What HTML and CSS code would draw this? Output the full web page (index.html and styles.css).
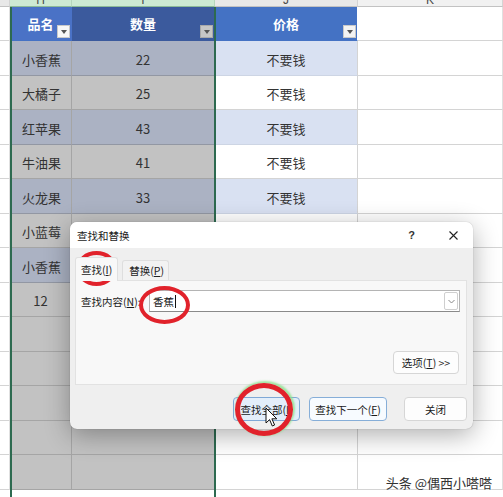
FILE: index.html
```html
<!DOCTYPE html>
<html lang="zh-CN">
<head>
<meta charset="utf-8">
<title>查找和替换</title>
<link rel="stylesheet" href="styles.css">
</head>
<body>
<div class="sheet">
  <div class="c ch"></div><div class="c ch s"><span>H</span></div><div class="c ch s"><span>I</span></div><div class="c ch"><span>J</span></div><div class="c ch kk"><span>K</span></div>

  <div class="c g"></div><div class="c th act">品名<i class="fb fb-light"></i></div><div class="c th dim">数量<i class="fb fb-dark"></i></div><div class="c th">价格<i class="fb"></i></div><div class="c k"></div>

  <div class="c g"></div><div class="c h sel b">小香蕉</div><div class="c i sel b">22</div><div class="c j b">不要钱</div><div class="c k"></div>
  <div class="c g"></div><div class="c h sel">大橘子</div><div class="c i sel">25</div><div class="c j">不要钱</div><div class="c k"></div>
  <div class="c g"></div><div class="c h sel b">红苹果</div><div class="c i sel b">43</div><div class="c j b">不要钱</div><div class="c k"></div>
  <div class="c g"></div><div class="c h sel">牛油果</div><div class="c i sel">41</div><div class="c j">不要钱</div><div class="c k"></div>
  <div class="c g"></div><div class="c h sel b">火龙果</div><div class="c i sel b">33</div><div class="c j b">不要钱</div><div class="c k"></div>
  <div class="c g"></div><div class="c h sel">小蓝莓</div><div class="c i sel"></div><div class="c j"></div><div class="c k"></div>
  <div class="c g"></div><div class="c h sel b">小香蕉</div><div class="c i sel b"></div><div class="c j b"></div><div class="c k"></div>
  <div class="c g"></div><div class="c h sel ctr">12</div><div class="c i sel"></div><div class="c j"></div><div class="c k"></div>
  <div class="c g"></div><div class="c h sel"></div><div class="c i sel"></div><div class="c j"></div><div class="c k"></div>
  <div class="c g"></div><div class="c h sel"></div><div class="c i sel"></div><div class="c j"></div><div class="c k"></div>
  <div class="c g"></div><div class="c h sel"></div><div class="c i sel"></div><div class="c j"></div><div class="c k"></div>
  <div class="c g"></div><div class="c h sel"></div><div class="c i sel"></div><div class="c j"></div><div class="c k"></div>
  <div class="c g"></div><div class="c h sel"></div><div class="c i sel"></div><div class="c j"></div><div class="c k"></div>
</div>

<div class="selbox"></div>

<div class="dlg">
  <div class="dlg-title">
    <span class="dlg-name">查找和替换</span>
    <span class="dlg-help">?</span>
    <svg class="dlg-close" width="9" height="9" viewBox="0 0 9 9"><path d="M0.5 0.5 L8.5 8.5 M8.5 0.5 L0.5 8.5" stroke="#222" stroke-width="1.1" fill="none"/></svg>
  </div>
  <div class="dlg-body">
    <div class="tabs">
      <div class="tab on">查找(<u>I</u>)</div>
      <div class="tab">替换(<u>P</u>)</div>
    </div>
    <div class="panel">
      <div class="find-row">
        <span class="lbl">查找内容(<u>N</u>):</span>
        <div class="inp">
          <span class="val">香蕉</span><span class="caret"></span>
          <span class="dd"><svg width="7" height="5" viewBox="0 0 7 5"><path d="M0.5 1 L3.5 4 L6.5 1" stroke="#888" stroke-width="1" fill="none"/></svg></span>
        </div>
      </div>
      <div class="opt-row"><span class="btn opt">选项(<u>T</u>) &gt;&gt;</span></div>
    </div>
    <div class="actions">
      <span class="btn blue w-all">查找全部(<u>I</u>)</span>
      <span class="btn blue2 w-next">查找下一个(<u>F</u>)</span>
      <span class="btn w-close">关闭</span>
    </div>
  </div>
</div>

<div class="ring r1"></div>
<div class="ring r2"></div>
<div class="ring r3"></div>

<svg class="cursor" width="13" height="21" viewBox="0 0 13 21"><path d="M1 1 L1 16 L4.6 12.6 L7.3 19 L9.6 18 L6.9 11.8 L11.8 11.8 Z" fill="#fff" stroke="#111" stroke-width="1" stroke-linejoin="round"/></svg>

<div class="wm">头条 @偶西小嗒嗒</div>
</body>
</html>
```

FILE: styles.css
```css
body {
  margin: 0;
  width: 503px;
  height: 497px;
  overflow: hidden;
  position: relative;
  background: #fff;
  font-family: "Noto Sans CJK SC", "Noto Sans", sans-serif;
}

.sheet {
  display: grid;
  grid-template-columns: 10px 62px 143px 143px 145px;
  grid-template-rows: 7px 34px;
  grid-auto-rows: 34.5px;
}

.c {
  box-sizing: border-box;
  border-right: 1px solid #d4d4d4;
  border-bottom: 1px solid #d4d4d4;
  display: flex;
  align-items: center;
  font-size: 13px;
  color: #333;
  padding-top: 3px;
  position: relative;
}

/* column letters */
.ch {
  background: #e8e8e8;
  border-bottom-color: #c2c2c2;
  overflow: hidden;
  align-items: flex-end;
  justify-content: center;
  padding: 0;
  font-family: "Liberation Sans", sans-serif;
  font-size: 12px;
  color: #4a4a4a;
}
.ch span { line-height: 12px; }
.ch.s { background: #cdead3; border-bottom-color: #8dbb98; border-right-color: #b6d6bd; }
.ch.kk { background: #f1f1f1; }

/* table header */
.th {
  background: #4472c4;
  color: #fff;
  font-weight: bold;
  justify-content: center;
  border-bottom-color: #4472c4;
  border-right-color: #fff;
  padding-top: 0;
  padding-bottom: 1px;
}
.th.act { background: #4a72c6; border-right-color: #4a72c6; }
.th.dim { background: #3b5a9d; border-right-color: #3b5a9d; border-bottom-color: #3b5a9d; }

.fb {
  position: absolute;
  right: 1px;
  bottom: 2px;
  width: 13px;
  height: 13px;
  box-sizing: border-box;
  background: #f3f3f3;
  border: 1px solid #c9c9c9;
}
.fb::after {
  content: "";
  position: absolute;
  left: 3px;
  top: 4px;
  border-top: 4px solid #555;
  border-left: 3px solid transparent;
  border-right: 3px solid transparent;
}
.fb-light { background: #f7f7f7; }
.fb-dark { background: #c6c6c6; border-color: #a9a9a9; }

.g { background: #fff; border-right-color: #e0e0e0; }
.h { padding-left: 12px; }
.i, .j, .ctr { justify-content: center; }
.ctr { padding-left: 0; }

.sel { background: #c2c2c2; border-color: #a5a5a5; }
.sel.b { background: #abb2c3; border-bottom-color: #9297a3; }
.j.b { background: #d9e1f2; border-bottom-color: #cdd5e4; }
.k { border-right-color: #e0e0e0; }

.selbox {
  position: absolute;
  left: 10px;
  top: 7px;
  width: 206px;
  bottom: 0;
  box-sizing: border-box;
  border-left: 2px solid #2d6a50;
  border-right: 2px solid #2d6a50;
  pointer-events: none;
}

/* dialog */
.dlg {
  position: absolute;
  left: 70px;
  top: 222px;
  width: 403px;
  height: 207px;
  border-radius: 7px;
  background: #efefef;
  box-shadow: 0 6px 26px rgba(0, 0, 0, 0.32), 0 0 1px rgba(0, 0, 0, 0.35);
  overflow: hidden;
  display: flex;
  flex-direction: column;
  font-size: 10.5px;
  color: #1a1a1a;
}
.dlg u { text-underline-offset: 1px; }

.dlg-title {
  height: 26px;
  background: #fff;
  display: flex;
  align-items: center;
  padding: 0 15px 0 7px;
  flex: none;
}
.dlg-name { flex: 1; }
.dlg-help {
  font-family: "Liberation Sans", sans-serif;
  font-size: 11px;
  font-weight: bold;
  color: #333;
  margin-right: 34px;
}

.dlg-body {
  flex: 1;
  padding: 9px 6px 0 5px;
  display: flex;
  flex-direction: column;
}

.tabs {
  display: flex;
  align-items: flex-end;
  height: 23px;
  position: relative;
  z-index: 1;
}
.tab {
  box-sizing: border-box;
  height: 20px;
  margin-left: 4px;
  padding: 0 4px 0 6px;
  display: flex;
  align-items: center;
  white-space: nowrap;
  background: #f2f2f2;
  border: 1px solid #dedede;
  border-bottom: none;
  border-radius: 3px 3px 0 0;
  color: #222;
}
.tab.on {
  margin-left: 0;
  height: 24px;
  margin-bottom: -1px;
  padding: 0 5px 0 5px;
  background: #f8f8f8;
  border-color: #e0e0e0;
}

.panel {
  box-sizing: border-box;
  height: 105px;
  background: #f8f8f8;
  border: 1px solid #e2e2e2;
  padding: 9px 6px 10px 5px;
  display: flex;
  flex-direction: column;
}
.find-row {
  display: flex;
  align-items: center;
  height: 22px;
}
.lbl { width: 68px; flex: none; white-space: nowrap; }
.inp {
  flex: 1;
  box-sizing: border-box;
  height: 22px;
  background: #fff;
  border: 1px solid #b4b4b4;
  border-bottom-color: #8a8a8a;
  display: flex;
  align-items: center;
  padding-left: 3px;
}
.caret {
  width: 1px;
  height: 13px;
  background: #111;
  margin-left: 1px;
}
.dd {
  margin-left: auto;
  margin-right: 1px;
  box-sizing: border-box;
  width: 14px;
  height: 18px;
  border: 1px solid #cfcfcf;
  border-radius: 2px;
  display: flex;
  align-items: center;
  justify-content: center;
}

.opt-row {
  margin-top: auto;
  display: flex;
  justify-content: flex-end;
  padding-right: 1px;
}

.btn {
  box-sizing: border-box;
  height: 24px;
  display: flex;
  align-items: center;
  justify-content: center;
  white-space: nowrap;
  background: #fdfdfd;
  border: 1px solid #d6d6d6;
  border-radius: 4px;
  color: #1a1a1a;
}
.opt { width: 66px; height: 23px; }

.actions {
  margin-top: 12px;
  display: flex;
  justify-content: flex-end;
}
.blue { background: #e3eefa; border-color: #7fa8d6; }
.blue2 { background: #f7fbff; border-color: #86aed8; }
.w-all { width: 67px; }
.w-next { width: 78px; margin-left: 9px; }
.w-close { width: 63px; margin-left: 17px; }

/* annotations */
.ring {
  position: absolute;
  box-sizing: border-box;
  border: 4px solid #e1222b;
  border-radius: 50%;
}
.r1 { left: 76px; top: 251px; width: 41px; height: 35px; }
.r2 { left: 139px; top: 286px; width: 51px; height: 38px; }
.r3 {
  left: 235px; top: 383px; width: 58px; height: 53px;
  border-width: 5px;
  box-shadow: 1px -1px 2px 1px rgba(140, 225, 140, 0.8);
}

.cursor {
  position: absolute;
  left: 265px;
  top: 407px;
}

.wm {
  position: absolute;
  right: 11px;
  bottom: 5px;
  font-size: 13px;
  color: #333;
  text-shadow: 0 0 2px #fff, 0 0 2px #fff;
}
```
